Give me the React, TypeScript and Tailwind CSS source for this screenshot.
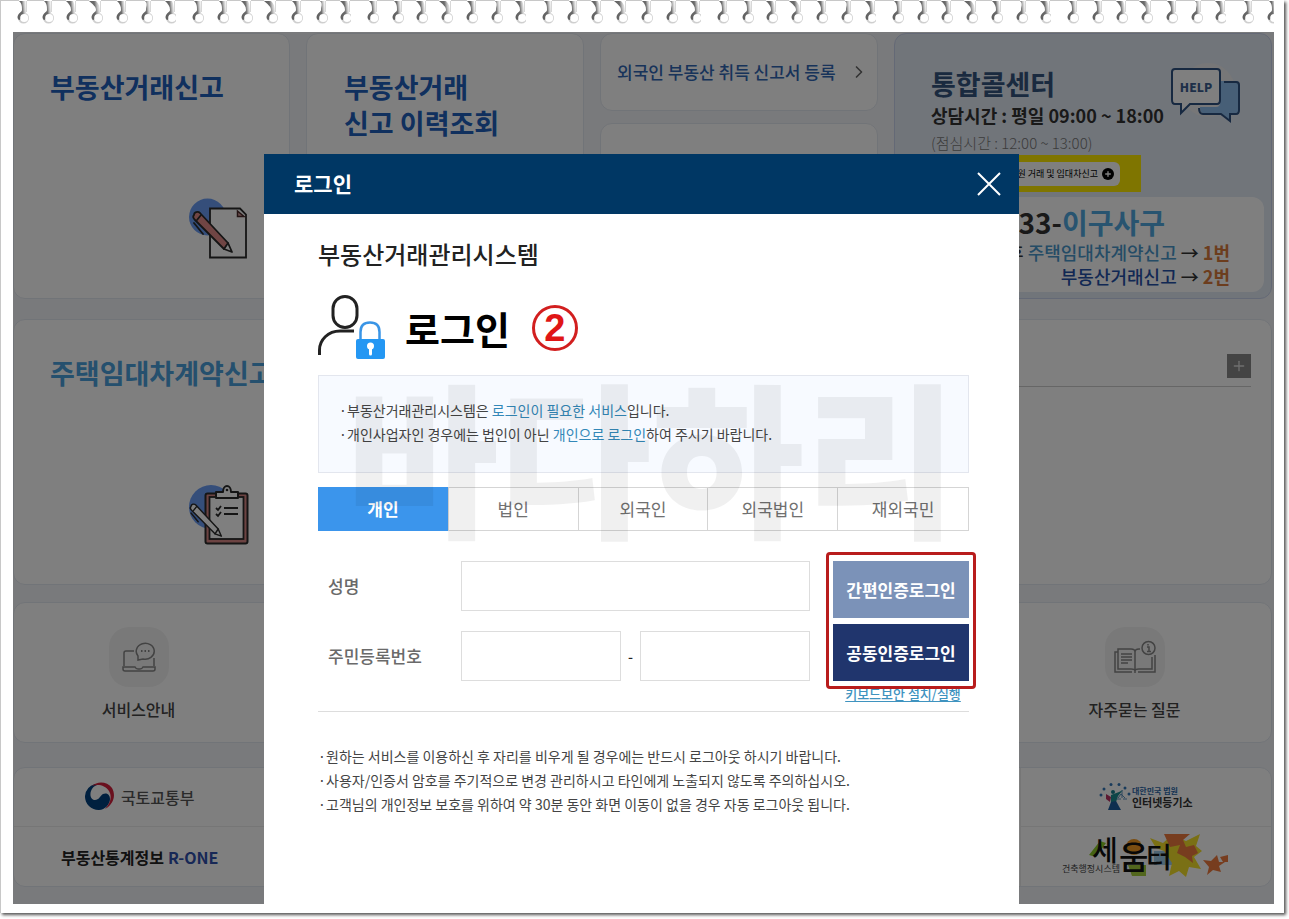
import React, { useState } from 'react';
import { ChevronRight, Plus } from 'lucide-react';

const TABS = ['개인', '법인', '외국인', '외국법인', '재외국민'];

const NOTES = [
  '원하는 서비스를 이용하신 후 자리를 비우게 될 경우에는 반드시 로그아웃 하시기 바랍니다.',
  '사용자/인증서 암호를 주기적으로 변경 관리하시고 타인에게 노출되지 않도록 주의하십시오.',
  '고객님의 개인정보 보호를 위하여 약 30분 동안 화면 이동이 없을 경우 자동 로그아웃 됩니다.',
];

// x = centre of the hole, top = where the wire leaves the upper edge
const RINGS = [
  { x: 22, top: -4 },
  { x: 47, top: -4 },
  { x: 71, top: -6 },
  { x: 96, top: -8 },
  { x: 121, top: -5 },
  { x: 146, top: -2 },
  { x: 170, top: -6 },
];

function BinderStrip() {
  return (
    <svg className="block h-8 w-full" aria-hidden="true">
      <defs>
        <linearGradient id="wire" x1="0" y1="0.6" x2="1" y2="0.4">
          <stop offset="0" stopColor="#606060" />
          <stop offset="0.55" stopColor="#6a6a6a" />
          <stop offset="0.8" stopColor="#c4c4c4" />
          <stop offset="1" stopColor="#f0f0f0" />
        </linearGradient>
        <pattern id="rings" width="175" height="32" patternUnits="userSpaceOnUse">
          <path d="M0 0.5H175" stroke="#c8c8c8" />
          {RINGS.map((r) => (
            <g key={r.x} transform={`translate(${r.x} 0)`}>
              <path d={`M${r.top} 0H4V10L1 13H-3Z`} fill="#fff" />
              <circle cx="0.500" cy="18" r="5.500" fill="#cfcfcf" />
              <path
                d={`M${r.top} 1C${r.top + 3} 4 -1 6 -1 10C-1 12 -5 13 -5.5 17C-5.5 19 -4.5 20 -3.500 20L3 14C3 8 3 5 ${Math.min(r.top + 7, 3)} 1Z`}
                fill="url(#wire)"
              />
              <circle cx="1.200" cy="18" r="4" fill="#fff" />
              <path d="M3.500 1V12" stroke="#d8d8d8" />
            </g>
          ))}
        </pattern>
      </defs>
      <rect width="100%" height="32" fill="url(#rings)" />
    </svg>
  );
}

function PenShape({ fill }: { fill: string }) {
  return (
    <g stroke="#2b2b2b" strokeWidth="1.8" strokeLinejoin="round" strokeLinecap="round">
      <path d="M5 25L14 36" fill="none" />
      <path d="M5 17C5 14 9 13 11 15L39 45L35 51L6 22C4 20 4 18 5 17Z" fill={fill} />
      <path d="M39 45L43 54L35 51M8 22L12 17" fill="none" />
    </g>
  );
}

function DocumentIcon() {
  return (
    <svg className="h-[62px] w-[60px]" viewBox="0 0 60 62" fill="none" aria-hidden="true">
      <circle cx="18.500" cy="19" r="18.500" fill="#6a9cf5" />
      <path d="M21 10.500H51L57 16.500V59.500H21Z" fill="#fff" stroke="#2b2b2b" strokeWidth="1.8" />
      <path d="M48.500 13V18.500H55Z" fill="#d69a98" stroke="#4a2a2a" strokeWidth="1.500" />
      <PenShape fill="#e08b88" />
    </svg>
  );
}

function ClipboardIcon() {
  return (
    <svg className="h-[62px] w-[60px]" viewBox="0 0 60 62" fill="none" aria-hidden="true">
      <circle cx="22" cy="23" r="22" fill="#6a9cf5" />
      <rect x="16.500" y="9.500" width="42" height="50" rx="2" fill="#d98784" stroke="#2b2b2b" strokeWidth="2" />
      <rect x="20.500" y="13" width="34" height="42" fill="#fff" stroke="#2b2b2b" strokeWidth="1.800" />
      <path d="M27 14V8H34C34 0 42 0 42 8H49V14Z" fill="#fff" stroke="#2b2b2b" strokeWidth="2" strokeLinejoin="round" />
      <circle cx="38" cy="6" r="1.300" fill="#2b2b2b" />
      <path d="M27 24L29 26L32 22M27 30L29 32L32 28M35 24H49M35 30H49" stroke="#2b2b2b" strokeWidth="1.800" />
      <g transform="translate(-2 9) scale(0.8)">
        <PenShape fill="#fff" />
      </g>
    </svg>
  );
}

function HelpIcon() {
  return (
    <svg className="h-[62px] w-[72px] shrink-0" viewBox="0 0 72 62" fill="none" aria-hidden="true">
      <circle cx="38" cy="28" r="27" fill="#eeeff0" />
      <path
        d="M48 19H66Q69.500 19 69.500 22V48Q69.500 51 66 51H60.500V59L51 51H33Q30 51 30 45H46Q50 45 50 41Z"
        fill="#8fbfee"
      />
      <path
        d="M54 20H66Q69 20 69 23V48Q69 52 66 52H60V59L51 52H33Q29 52 29 46"
        stroke="#2f5282"
        strokeWidth="2"
      />
      <path
        d="M5 7H47Q50 7 50 10V38Q50 42 47 42H20L11 51V42H5Q2 42 2 38V10Q2 7 5 7Z"
        fill="#fff"
        stroke="#2f5282"
        strokeWidth="2"
      />
      <text x="26" y="30" textAnchor="middle" fontSize="12" fontWeight="900" fill="#3d5f92" fontFamily="Noto Sans CJK KR, sans-serif">
        HELP
      </text>
    </svg>
  );
}

function LaptopIcon() {
  return (
    <svg className="h-[30px] w-[34px]" viewBox="0 0 34 30" fill="none" stroke="#868686" strokeWidth="1.500" aria-hidden="true">
      <path d="M12 9H4Q2 9 2 11V24M32 16V24" />
      <path d="M1 25H13Q14 27 16 27H18Q20 27 21 25H33V27Q33 29 31 29H3Q1 29 1 27Z" />
      <path d="M16 14A9 8 0 1 1 21 17L16 18Z" />
      <path d="M19 9H20.500M22.500 9H24M26 9H27.500" strokeWidth="2" />
    </svg>
  );
}

function BookIcon() {
  return (
    <svg className="h-[34px] w-[42px]" viewBox="0 0 42 34" fill="none" stroke="#868686" strokeWidth="1.500" aria-hidden="true">
      <path d="M4 9H17Q21 9 21 12V31Q21 29 17 29H4ZM4 12H1V32H18M21 12Q21 9 25 9H26M38 17V29H25Q21 29 21 31M41 15V32H24M21 30V33" />
      <path d="M7 14H18M7 17H18M7 20H18M7 23H14" />
      <circle cx="34.500" cy="8" r="6.500" />
      <path d="M33 7H35V11M33 11.500H37M34 4V5.500" />
    </svg>
  );
}

function GovernmentLogo() {
  return (
    <svg className="h-[30px] w-[30px]" viewBox="0 0 30 30" aria-hidden="true">
      <path
        d="M10 2A14 14 0 0 0 0 14A13.500 13.500 0 0 0 14 28C20 28 25 22 25 17C25 12 21 10.500 18 12C15 14 14 18 10 18C6 18 4.500 13 6 9C7 6 9 4 12 3Z"
        fill="#00407f"
      />
      <path d="M7 4C12 -1 22 -1 27 6C31 13 29 22 20 27C26 21 27 14 24 9C20 3 13 2 7 4Z" fill="#d5203c" />
    </svg>
  );
}

function CourtLogo() {
  return (
    <svg className="h-[30px] w-[32px]" viewBox="0 0 32 30" fill="none" aria-hidden="true">
      <g fill="#3277b8">
        <circle cx="2" cy="13" r="1.500" />
        <circle cx="5" cy="7" r="1.500" />
        <circle cx="12" cy="2.500" r="1.500" />
        <circle cx="20" cy="2.500" r="1.500" />
        <circle cx="26" cy="6" r="1.500" />
        <circle cx="30" cy="12" r="1.500" />
      </g>
      <path d="M7 12L12 15L11 20L7 17Z" fill="#b83263" />
      <circle cx="14" cy="10" r="2" fill="#187f8e" />
      <path d="M12 13L20 10L24 8L19 14L17 20L12 21Z" fill="#1d8d90" />
      <path d="M12 20L17 19L22 28L9 28Z" fill="#1d5c9e" />
      <path d="M23 8V16M19 16L22 12M22 12L26 16M18 17H22M24 17H28" stroke="#5b8ebb" />
    </svg>
  );
}

function SeumterLogo() {
  return (
    <svg
      className="h-12 w-[168px] overflow-visible"
      viewBox="0 0 168 48"
      fontFamily="Noto Sans CJK KR, sans-serif"
      aria-label="세움터 건축행정시스템"
    >
      <path d="M27 22L38 8L44 10L34 24Z" fill="#8ac926" />
      <circle cx="72" cy="14" r="8" fill="#f59a23" />
      <path d="M66 32H84V43H70Z" fill="#a5cc3a" />
      <rect x="92" y="18" width="18" height="14" fill="#9ccbe8" />
      <path
        d="M88 5L101 10L110 2L124 8L138 1L134 13L140 18L132 24L139 36L127 34L124 44L117 38L107 43L110 30L102 18L94 15Z"
        fill="#f5e02a"
      />
      <path d="M102 1H128L121 7L124 14L132 12L136 20L130 23L131 30L123 24L115 20L118 12L108 14Z" fill="#ee7b3e" />
      <path d="M141 27L149 28L155 22L157 29L163 29L157 33L159 39L151 37L145 42L147 34ZM158 24L166 22L166 29L161 29Z" fill="#ee7b3e" />
      <g fontWeight="500" fill="#111">
        <text x="30" y="28" fontSize="28">세</text>
        <text x="57" y="36" fontSize="32">움</text>
        <text x="84" y="35" fontSize="28">터</text>
      </g>
      <text x="0" y="39" fontSize="9" fill="#444">
        건축행정시스템
      </text>
    </svg>
  );
}

function UserLockIcon() {
  return (
    <svg className="h-[65px] w-[67px]" viewBox="0 0 67 65" fill="none" aria-hidden="true">
      <rect x="15" y="1.500" width="24" height="31" rx="12" stroke="#222" strokeWidth="3" />
      <path d="M1.500 60V55C1.500 45 10 36 22 36H36" stroke="#222" strokeWidth="3" />
      <path d="M42.500 45V37Q42.500 27.500 52 27.500Q61.500 27.500 61.500 37V45" stroke="#3a95e6" strokeWidth="2.500" />
      <rect x="38" y="44" width="29" height="20" rx="2" fill="#2497f3" />
      <circle cx="52.500" cy="51" r="3.500" fill="#fff" />
      <path d="M52.500 51V59" stroke="#fff" strokeWidth="3" strokeLinecap="round" />
    </svg>
  );
}

function Card({ className = '', children }: { className?: string; children?: React.ReactNode }) {
  return <section className={`rounded-xl border border-[#e3e8f0] bg-white ${className}`}>{children}</section>;
}

function Bullet({ children }: { children: React.ReactNode }) {
  return (
    <li className="flex whitespace-nowrap">
      <span className="w-2 shrink-0">·</span>
      <span>{children}</span>
    </li>
  );
}

function CallCenter() {
  return (
    <section className="flex h-[266px] flex-col rounded-xl border border-[#c9d3ec] bg-[#e3eaf4]">
      <div className="flex justify-between pt-7 pr-[29px] pl-9 whitespace-nowrap">
        <div className="pt-1.5">
          <h2 className="text-[27px] leading-8 font-bold text-[#34557f]">통합콜센터</h2>
          <p className="text-lg leading-[30px] font-bold text-[#333]">상담시간 : 평일 09:00 ~ 18:00</p>
          <p className="text-[15px] leading-[26px] font-light text-[#777]">(점심시간 : 12:00 ~ 13:00)</p>
        </div>
        <HelpIcon />
      </div>
      <div className="-mt-px ml-9 flex h-[37px] w-[210px] items-center justify-end bg-[#ffea00] pr-[21px]">
        <a href="#report" className="flex h-6 items-center gap-1 rounded-md bg-white px-1.5 text-[9px] whitespace-nowrap text-black">
          공공기관 지원 거래 및 임대차신고
          <span className="flex size-3 items-center justify-center rounded-full bg-black">
            <Plus className="size-2 text-white" strokeWidth={4} />
          </span>
        </a>
      </div>
      <div className="mx-[7px] mt-[5px] h-[95px] rounded-xl bg-white pt-[7px] pr-[34px] text-right text-lg leading-6 font-medium text-[#333]">
        <p className="pr-[65px] text-[28px] leading-9 font-bold">
          1533-<span className="text-[#50a8e0]">이구사구</span>
        </p>
        <p>
          후 <span className="text-[#4a98cc]">주택임대차계약신고</span> → <b className="text-[#d97a3c]">1번</b>
        </p>
        <p>
          <span className="text-[#2450a8]">부동산거래신고</span> → <b className="text-[#d97a3c]">2번</b>
        </p>
      </div>
    </section>
  );
}

function MainPage() {
  return (
    <div className="bg-[#f3f5f9] pt-px pr-0.5 pb-[17px]">
      <div className="grid grid-cols-[minmax(0,277fr)_minmax(0,278fr)_minmax(0,278fr)_minmax(0,378fr)] gap-x-4 gap-y-5">
        <Card className="flex h-[266px] flex-col justify-between px-9 pt-[35px] pb-[38px]">
          <h2 className="text-[27px] leading-9 font-bold whitespace-nowrap text-[#2160bd]">부동산거래신고</h2>
          <div className="self-end pr-1">
            <DocumentIcon />
          </div>
        </Card>
        <Card className="px-[37px] pt-[35px]">
          <h2 className="text-[27px] leading-9 font-bold whitespace-nowrap text-[#2160bd]">
            부동산거래
            <br />
            신고 이력조회
          </h2>
        </Card>
        <div className="flex flex-col gap-3">
          <Card className="h-[78px]">
            <a href="#foreigner" className="flex h-full items-center justify-between pr-2 pl-4 text-[17px] font-medium whitespace-nowrap text-[#3067b5]">
              외국인 부동산 취득 신고서 등록
              <ChevronRight className="size-5 text-[#666]" />
            </a>
          </Card>
          <Card className="flex-1" />
        </div>
        <CallCenter />

        <Card className="flex h-[266px] flex-col justify-between px-9 pt-[35px] pb-[38px]">
          <h2 className="text-[27px] leading-9 font-bold whitespace-nowrap text-[#4aa0dc]">주택임대차계약신고</h2>
          <div className="self-end pr-1">
            <ClipboardIcon />
          </div>
        </Card>
        <Card />
        <Card className="col-span-2 px-5 pt-[34px]">
          <div className="flex justify-end border-b border-[#ccc] pb-2">
            <button type="button" aria-label="더보기" className="flex size-6 items-center justify-center bg-[#888] text-[#ddd]">
              <Plus className="size-4" />
            </button>
          </div>
        </Card>
      </div>

      <Card className="mt-[17px] flex h-[141px] justify-between pr-3 text-base font-medium text-[#444]">
        <a href="#guide" className="flex w-1/5 flex-col items-center gap-2.5 pt-6">
          <span className="flex size-[60px] items-center justify-center rounded-[20px] bg-[#f3f3f3]">
            <LaptopIcon />
          </span>
          서비스안내
        </a>
        <a href="#faq" className="flex w-1/5 flex-col items-center gap-2.5 pt-6">
          <span className="flex size-[60px] items-center justify-center rounded-[20px] bg-[#f3f3f3]">
            <BookIcon />
          </span>
          자주묻는 질문
        </a>
      </Card>

      <Card className="mt-6 flex h-[120px] justify-between">
        <div className="w-1/5 divide-y divide-[#ececec]">
          <a href="#molit" className="flex h-[59px] items-center justify-center gap-1.5 text-base font-medium text-[#555]">
            <GovernmentLogo />
            국토교통부
          </a>
          <a href="#rone" className="flex h-[59px] items-center justify-center gap-1 text-base font-bold text-[#222]">
            부동산통계정보 <span className="text-[#2f50ac]">R-ONE</span>
          </a>
        </div>
        <div className="w-1/5 divide-y divide-[#ececec] border-l border-[#ececec]">
          <a href="#iros" className="flex h-[59px] items-center justify-center gap-px text-[#333]">
            <CourtLogo />
            <span className="flex flex-col font-bold">
              <span className="text-[8px] leading-2.5 text-[#2d68a8]">대한민국 법원</span>
              <span className="text-[11px] leading-3">인터넷등기소</span>
            </span>
          </a>
          <a href="#seumter" className="flex h-[59px] items-center justify-center">
            <SeumterLogo />
          </a>
        </div>
      </Card>
    </div>
  );
}

function LoginModal() {
  const [tab, setTab] = useState('개인');

  return (
    <div role="dialog" aria-label="로그인" className="relative flex w-full max-w-[755px] flex-col bg-white">
      <header className="flex h-[60px] items-center justify-between bg-[#003764] pr-[18px] pl-[30px] text-white">
        <h2 className="text-[21px] font-bold">로그인</h2>
        <button type="button" aria-label="닫기">
          <svg className="size-6" viewBox="0 0 24 24" fill="none" stroke="currentColor" strokeWidth="2">
            <path d="M1 1L23 23M23 1L1 23" />
          </svg>
        </button>
      </header>

      <div className="pt-[22px] pr-[50px] pl-[54px]">
        <h1 className="text-2xl leading-9 font-medium text-[#222]">부동산거래관리시스템</h1>

        <div className="mt-[23px] flex h-[65px] items-center">
          <UserLockIcon />
          <span className="ml-5 text-[38px] leading-[60px] font-bold text-black">로그인</span>
          <span className="ml-[22px] flex size-[46px] items-center justify-center rounded-full border-3 border-[#d21f1f] font-['Liberation_Sans'] text-[38px] leading-10 font-bold text-[#e01616]">
            2
          </span>
        </div>

        <ul className="mt-[15px] h-[98px] border border-[#e3e6ee] bg-[#f7faff] px-5 pt-[22px] text-sm leading-6 text-[#444]">
          <Bullet>
            부동산거래관리시스템은 <span className="text-[#3388b8]">로그인이 필요한 서비스</span>입니다.
          </Bullet>
          <Bullet>
            개인사업자인 경우에는 법인이 아닌 <span className="text-[#3388b8]">개인으로 로그인</span>하여 주시기 바랍니다.
          </Bullet>
        </ul>

        <div role="tablist" className="mt-3.5 grid h-11 grid-cols-5 divide-x divide-[#d5d5d5] border border-[#d5d5d5]">
          {TABS.map((name) => (
            <button
              key={name}
              type="button"
              role="tab"
              aria-selected={tab === name}
              onClick={() => setTab(name)}
              className={
                tab === name
                  ? '-my-px -ml-px bg-[#3b95ec] text-[17px] font-bold text-white'
                  : 'text-[17px] text-[#707070]'
              }
            >
              {name}
            </button>
          ))}
        </div>

        <form className="mt-[30px] flex gap-[23px] border-b border-[#ddd] pb-[7px]" onSubmit={(e) => e.preventDefault()}>
          <div className="flex min-w-0 flex-1 flex-col gap-5 text-[17px] font-medium text-[#6a6a6a]">
            <div className="flex items-center">
              <label htmlFor="name" className="w-[143px] shrink-0 pl-2.5">
                성명
              </label>
              <input id="name" type="text" className="h-[50px] min-w-0 flex-1 border border-[#ddd] px-3" />
            </div>
            <div className="flex items-center">
              <label htmlFor="rrn1" className="w-[143px] shrink-0 pl-2.5">
                주민등록번호
              </label>
              <input id="rrn1" type="text" className="h-[50px] w-[160px] border border-[#ddd] px-3" />
              <span className="w-[19px] shrink-0 text-center text-sm text-[#222]">-</span>
              <input type="password" aria-label="주민등록번호 뒷자리" className="h-[50px] min-w-0 flex-1 border border-[#ddd] px-3" />
            </div>
          </div>
          <div className="w-[136px] shrink-0 whitespace-nowrap">
            <div className="relative flex flex-col gap-1.5">
              <button type="button" className="h-[57px] bg-[#7b92b8] text-[17px] font-bold text-white">
                간편인증로그인
              </button>
              <button type="submit" className="h-[57px] bg-[#20356d] text-[17px] font-bold text-white">
                공동인증로그인
              </button>
              <span className="pointer-events-none absolute -inset-x-[7px] -top-[9px] -bottom-2 rounded-sm border-3 border-[#b81c1c]" />
            </div>
            <a href="#keyboard" className="mt-[3px] block pl-1 text-center text-[13px] leading-5 font-medium text-[#3f93bf] underline underline-offset-2">
              키보드보안 설치/실행
            </a>
          </div>
        </form>

        <ul className="mt-8 text-sm leading-6 text-[#444]">
          {NOTES.map((note) => (
            <Bullet key={note}>{note}</Bullet>
          ))}
        </ul>
      </div>

      <p
        aria-hidden="true"
        className="pointer-events-none absolute inset-x-0 top-[214px] pl-5 text-center text-[166px] leading-[170px] font-black whitespace-nowrap text-black/6"
      >
        바다하리
      </p>
    </div>
  );
}

export default function App() {
  return (
    <div className="min-h-screen bg-white pr-[5px] pb-1.5 font-['Noto_Sans_CJK_KR',sans-serif]">
      <div className="border-l border-[#c8c8c8] bg-white pr-2.5 pb-[9px] shadow-[2px_2px_3px_#555]">
        <BinderStrip />
        <main className="relative ml-3 overflow-hidden">
          <MainPage />
          <div className="absolute inset-0 flex justify-center bg-black/50 pt-[122px] pr-1">
            <LoginModal />
          </div>
        </main>
      </div>
    </div>
  );
}
